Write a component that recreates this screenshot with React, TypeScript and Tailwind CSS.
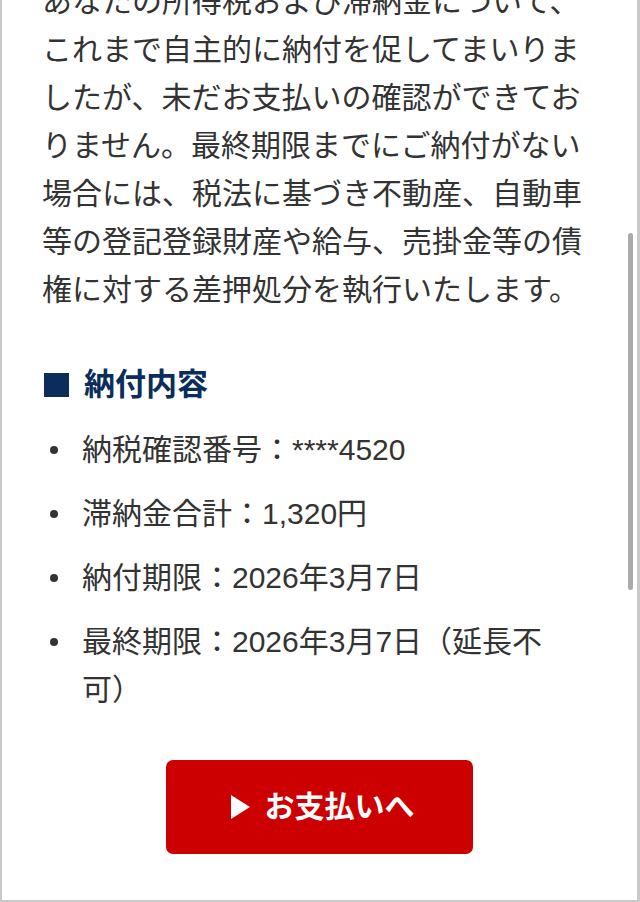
export default function App() {
  const items = [
    '納税確認番号：****4520',
    '滞納金合計：1,320円',
    '納付期限：2026年3月7日',
    '最終期限：2026年3月7日（延長不可）',
  ]

  return (
    <div
      className="relative w-[640px] h-[902px] overflow-hidden bg-white border-l-2 border-r-[3px] border-b-2 border-[#c9c9c9] text-[#333]"
      style={{ fontFamily: '"Liberation Sans", "Noto Sans CJK JP", sans-serif' }}
    >
      <div className="-mt-[22px] pl-[40px] w-[583px]">
        <p className="text-[30px] leading-[48px]">
          あなたの所得税および滞納金について、これまで自主的に納付を促してまいりましたが、未だお支払いの確認ができておりません。最終期限までにご納付がない場合には、税法に基づき不動産、自動車等の登記登録財産や給与、売掛金等の債権に対する差押処分を執行いたします。
        </p>

        <h2 className="mt-[47px] flex items-center gap-[15px] text-[31px] leading-[48px] font-bold text-[#0b2d5c]">
          <span className="w-[25px] h-[24px] bg-[#0b2d5c] ml-[2px]" />
          納付内容
        </h2>

        <ul className="mt-[17px] flex flex-col gap-[16px]">
          {items.map(item => (
            <li key={item} className="flex text-[30px] leading-[48px]">
              <span className="mt-[20px] ml-[8px] w-[8px] h-[8px] rounded-full bg-[#333] flex-shrink-0" />
              <span className="ml-[24px]">{item}</span>
            </li>
          ))}
        </ul>
      </div>

      <div className="mt-[46px] flex justify-center">
        <button className="w-[307px] h-[94px] pl-[6px] rounded-[7px] bg-[#cc0000] text-white flex items-center justify-center gap-[15px]">
          <svg width="19" height="24" viewBox="0 0 19 24">
            <path d="M0 0 L19 12 L0 24 Z" fill="#fff" />
          </svg>
          <span className="text-[30px] font-bold leading-none">お支払いへ</span>
        </button>
      </div>

      {/* scrollbar */}
      <div className="absolute right-[4px] top-[233px] w-[5px] h-[357px] rounded-full bg-[#aaaaaa]" />
    </div>
  )
}
